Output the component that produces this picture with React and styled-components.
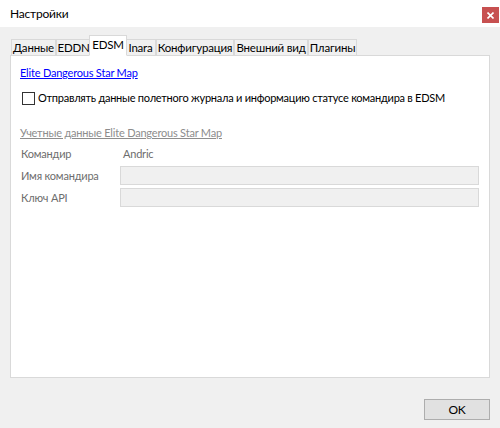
import React from "react";
import styled, { createGlobalStyle } from "styled-components";

const GlobalStyle = createGlobalStyle`
    html, body {
        margin: 0;
        padding: 0;
        background: #f0f0f0;
    }

    body {
        font-family: Lato, "Noto Sans", sans-serif;
        font-size: 11px;
        letter-spacing: -0.2px;
        line-height: 16px;
        color: #000;
    }
`;

const tabs = [
    { name: "Данные", width: 45 },
    { name: "EDDN", width: 35 },
    { name: "EDSM", width: 34 },
    { name: "Inara", width: 31 },
    { name: "Конфигурация", width: 78 },
    { name: "Внешний вид", width: 74 },
    { name: "Плагины", width: 49 },
];

const App = () => {
    const active = "EDSM";

    return (
        <>
            <GlobalStyle />
            <Window>
                <TitleBar>
                    <Title>Настройки</Title>
                    <CloseButton>
                        <svg width="7" height="7" viewBox="0 0 7 7">
                            <path
                                d="M0.5 0.5 L6.5 6.5 M6.5 0.5 L0.5 6.5"
                                stroke="#fff"
                                strokeWidth="1.6"
                            />
                        </svg>
                    </CloseButton>
                </TitleBar>

                <Body>
                    <TabStrip>
                        {tabs.map((tab) => (
                            <Tab
                                key={tab.name}
                                $width={tab.width}
                                $active={tab.name === active}
                            >
                                {tab.name}
                            </Tab>
                        ))}
                    </TabStrip>

                    <TabPanel>
                        <Link>Elite Dangerous Star Map</Link>

                        <CheckRow>
                            <CheckBox />
                            <CheckLabel>
                                Отправлять данные полетного журнала и
                                информацию статусе командира в EDSM
                            </CheckLabel>
                        </CheckRow>

                        <SectionLink>
                            Учетные данные Elite Dangerous Star Map
                        </SectionLink>

                        <CredGrid>
                            <FieldLabel>Командир</FieldLabel>
                            <FieldValue>Andric</FieldValue>

                            <FieldLabel>Имя командира</FieldLabel>
                            <TextBox />

                            <FieldLabel>Ключ API</FieldLabel>
                            <TextBox />
                        </CredGrid>
                    </TabPanel>

                    <Footer>
                        <Button>OK</Button>
                    </Footer>
                </Body>
            </Window>
        </>
    );
};

export default App;

const Window = styled.div`
    width: 500px;
    height: 428px;

    display: flex;
    flex-direction: column;

    background: #f0f0f0;

    overflow: hidden;
`;

const TitleBar = styled.div`
    height: 27px;

    display: flex;
    align-items: flex-start;

    background: #fff;

    padding-left: 10px;
    padding-right: 1px;
`;

const Title = styled.div`
    margin-top: 6px;

    font-size: 12px;
`;

const CloseButton = styled.div`
    width: 17px;
    height: 16px;

    margin-left: auto;
    margin-top: 7px;

    display: flex;
    align-items: center;
    justify-content: center;

    background: #c75050;
`;

const Body = styled.div`
    flex: 1;

    display: flex;
    flex-direction: column;

    padding: 8px 10px 0 10px;
`;

const TabStrip = styled.div`
    height: 20px;

    display: flex;
    align-items: flex-end;

    padding-left: 1px;

    position: relative;
    z-index: 1;
`;

const Tab = styled.div`
    box-sizing: border-box;

    width: ${(props) => (props.$active ? props.$width + 4 : props.$width)}px;
    height: ${(props) => (props.$active ? 21 : 16)}px;

    margin: ${(props) => (props.$active ? "0 -2px -1px -2px" : "0")};

    display: flex;
    align-items: ${(props) => (props.$active ? "flex-start" : "center")};
    justify-content: center;

    border: 1px solid #d9d9d9;
    border-bottom: ${(props) =>
        props.$active ? "1px solid #fff" : "none"};

    background: ${(props) => (props.$active ? "#fff" : "#f0f0f0")};

    font-size: 11.5px;
    line-height: 14px;
    white-space: nowrap;

    padding-top: ${(props) => (props.$active ? "2px" : "1px")};

    position: relative;
    z-index: ${(props) => (props.$active ? 2 : 1)};
`;

const TabPanel = styled.div`
    box-sizing: border-box;

    height: 323px;

    background: #fff;

    border: 1px solid #d9d9d9;

    padding: 9px 9px 0 9px;
`;

const Link = styled.div`
    color: #0000ff;

    text-decoration: underline;

    display: inline-block;
`;

const CheckRow = styled.div`
    display: flex;
    align-items: center;

    margin-top: 9px;

    padding-left: 2px;
`;

const CheckBox = styled.div`
    box-sizing: border-box;

    width: 13px;
    height: 13px;

    flex-shrink: 0;

    border: 1px solid #333;

    background: #fff;

    margin-right: 3px;
`;

const CheckLabel = styled.div`
    white-space: nowrap;

    letter-spacing: -0.25px;
`;

const SectionLink = styled.div`
    margin-top: 19px;

    color: #8d8d8d;

    text-decoration: underline;
`;

const CredGrid = styled.div`
    display: grid;

    grid-template-columns: 99px 359px;
    grid-auto-rows: 19px;

    row-gap: 3px;

    align-items: center;

    margin-top: 3px;

    padding-left: 1px;
`;

const FieldLabel = styled.div`
    color: #6d6d6d;
`;

const FieldValue = styled.div`
    color: #6d6d6d;

    padding-left: 3px;
`;

const TextBox = styled.div`
    box-sizing: border-box;

    height: 19px;

    background: #f0f0f0;

    border: 1px solid #d9d9d9;
`;

const Footer = styled.div`
    display: flex;
    justify-content: flex-end;

    padding-top: 21px;
`;

const Button = styled.div`
    box-sizing: border-box;

    width: 66px;
    height: 21px;

    display: flex;
    align-items: center;
    justify-content: center;

    background: #e1e1e1;

    border: 1px solid #adadad;

    font-size: 12px;
`;
